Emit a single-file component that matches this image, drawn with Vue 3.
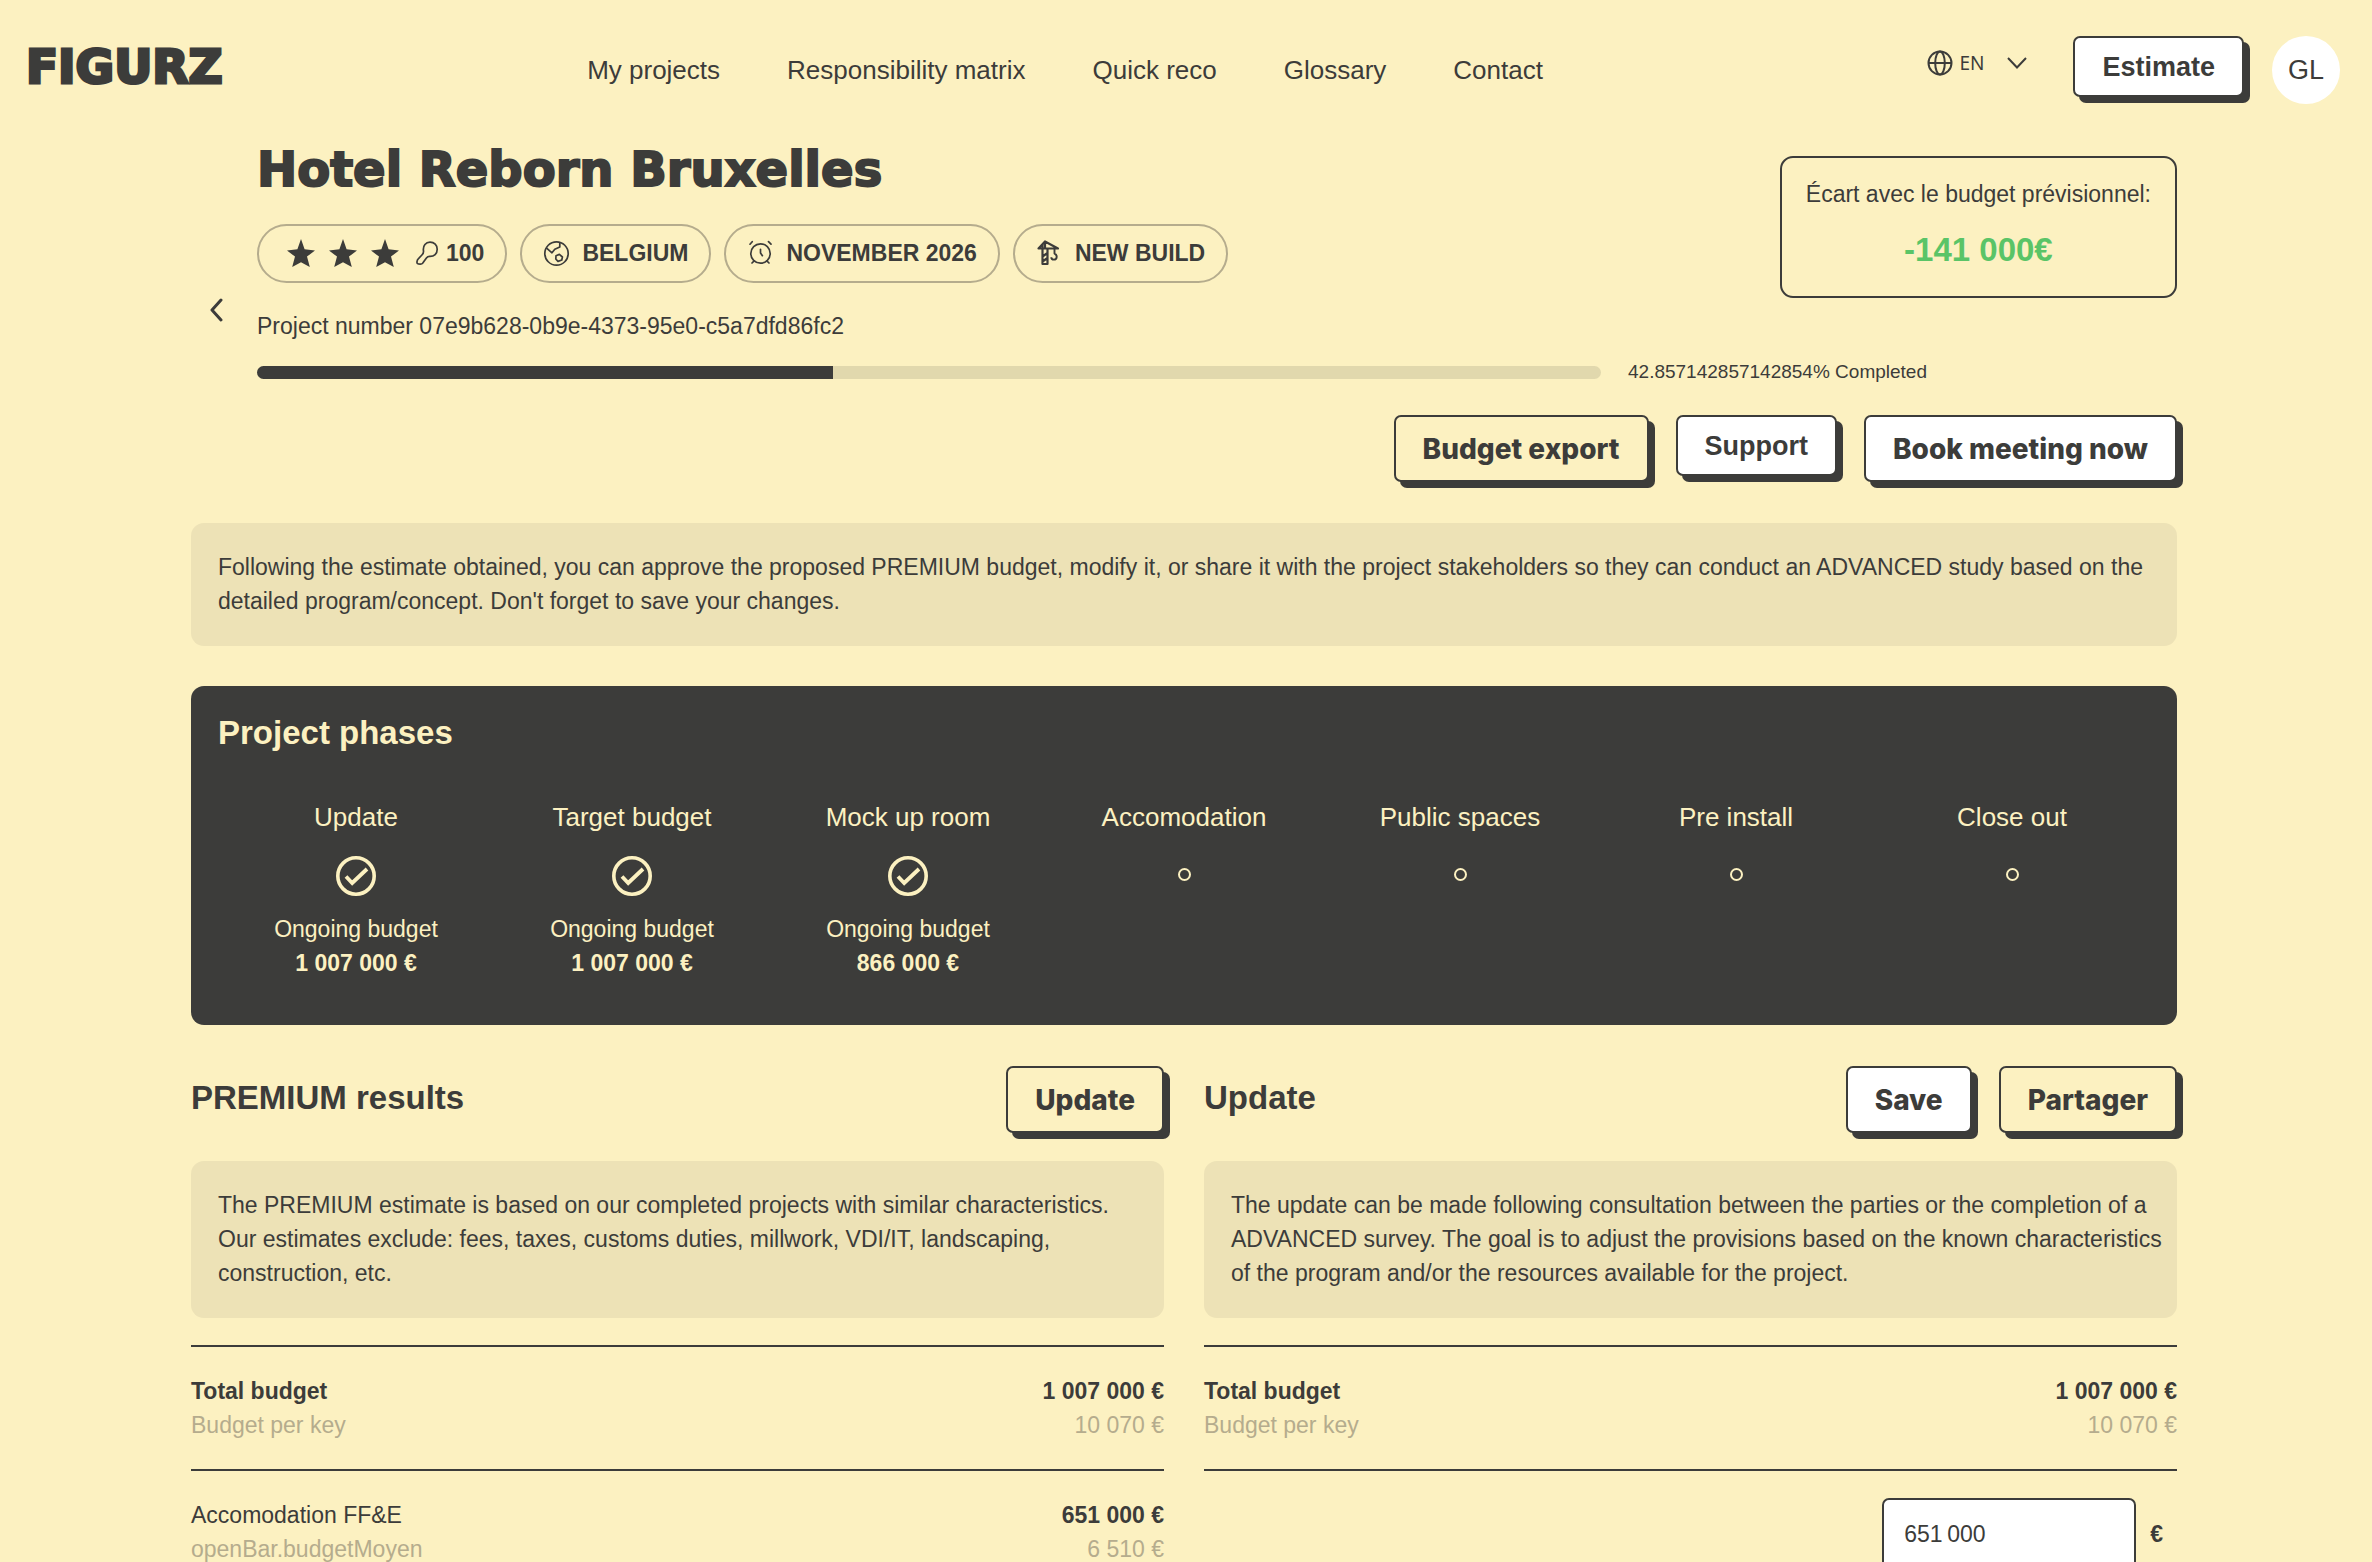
<script setup>
import { ref } from 'vue'

const lang = ref('EN')
const accomodation = ref('651\u202f000')

const links = ['My projects', 'Responsibility matrix', 'Quick reco', 'Glossary', 'Contact']

const progress = 42.857142857142854

const phases = [
  { name: 'Update', budget: '1 007 000 €' },
  { name: 'Target budget', budget: '1 007 000 €' },
  { name: 'Mock up room', budget: '866 000 €' },
  { name: 'Accomodation' },
  { name: 'Public spaces' },
  { name: 'Pre install' },
  { name: 'Close out' },
]
</script>

<template>
  <div class="page">
    <header class="header">
      <a class="logo" href="#">FIGURZ</a>
      <nav class="nav">
        <a v-for="link in links" :key="link" class="nav__link" href="#">{{ link }}</a>
      </nav>
      <div class="header__right">
        <label class="lang">
          <svg class="lang__globe" viewBox="0 0 26 26" fill="none" stroke="currentColor" stroke-width="2">
            <circle cx="13" cy="13" r="11.5" />
            <ellipse cx="13" cy="13" rx="4.8" ry="11.5" />
            <path d="M1.5 13h23" />
          </svg>
          <select v-model="lang" class="lang__select" aria-label="Language">
            <option>EN</option>
            <option>FR</option>
          </select>
          <svg class="lang__chevron" viewBox="0 0 20 12" fill="none" stroke="currentColor" stroke-width="2">
            <path d="M1 1l9 9.500l9-9.500" />
          </svg>
        </label>
        <button class="button button_small">Estimate</button>
        <button class="avatar">GL</button>
      </div>
    </header>

    <main class="main">
      <section class="project">
        <button class="back" aria-label="Back">
          <svg class="back__icon" viewBox="0 0 14 24" fill="none" stroke="currentColor" stroke-width="3" stroke-linecap="round" stroke-linejoin="round">
            <path d="M12 2L3 12l9 10" />
          </svg>
        </button>
        <div class="project__body">
          <div class="project__top">
            <div class="project__info">
              <h1 class="project__title">Hotel Reborn Bruxelles</h1>
              <div class="pills">
                <div class="pill pill_rating">
                  <div class="stars">
                    <svg v-for="n in 3" :key="n" class="icon" viewBox="0 0 28 28" fill="currentColor">
                      <path d="M14 0l3.600 10.200L28 11.400l-8 6.200L22.800 28L14 23.200L5.200 28L8 17.600l-8-6.200l10.400-1.200z" />
                    </svg>
                    <svg class="icon" viewBox="0 0 28 28" fill="none" stroke="currentColor" stroke-width="1.700" stroke-linejoin="round">
                      <path d="M10.500 12C9.600 6.600 13 3.200 17 3.200c4.300 0 7.200 3 7.200 7c0 4.600-3 7.400-7.600 7.200c-1.800 0-2.400.6-3.200 1.700l-3.600 5c-.6.9-1.400 1.100-2.500 1.100c-2.600 0-3.600-.7-3.300-2.600c.1-1.600.5-2.300 1.700-3.300l3.200-3.300c1.300-1.300 1.800-2.100 1.600-4z" />
                    </svg>
                  </div>
                  <span>100</span>
                </div>
                <div class="pill">
                  <svg class="icon" viewBox="0 0 28 28" fill="none" stroke="currentColor" stroke-width="1.700" stroke-linejoin="round">
                    <circle cx="13.500" cy="14.500" r="11.700" />
                    <path d="M3.300 8.800L9 13.800l2.800-3.500l5-2.300V3.300" />
                    <path d="M13 16.800l3.400-1.400l3 2.600l-.6 3l-3.800 1.400l-2.200-2.400z" />
                  </svg>
                  <span>BELGIUM</span>
                </div>
                <div class="pill">
                  <svg class="icon" viewBox="0 0 28 28" fill="none" stroke="currentColor" stroke-width="1.700" stroke-linecap="round">
                    <circle cx="13.500" cy="14.500" r="9.700" />
                    <path d="M13.500 10.300v3.600l1.900 2.800M7.200 21.800L5 24M19.800 21.800L22 24M3 5.200L5.200 2.700M21.500 2.700L24 5.200" />
                  </svg>
                  <span>NOVEMBER 2026</span>
                </div>
                <div class="pill">
                  <svg class="icon" viewBox="0 0 28 28" fill="none" stroke="currentColor" stroke-width="2.200" stroke-linejoin="round">
                    <path d="M6.500 10v15h5V10M6.500 17.500l5-3.500M6.500 22.500l5-3.500" />
                    <path d="M2.500 9.500L9 2.500L22 9.500zM6.500 9V5.500M9 3v6.500" />
                    <path d="M18.500 10v4.600c3.200 1.300 2.800 6-.6 6c-1.600 0-2.600-1-2.600-2.400" stroke-width="1.900" />
                  </svg>
                  <span>NEW BUILD</span>
                </div>
              </div>
              <p class="project__number">Project number 07e9b628-0b9e-4373-95e0-c5a7dfd86fc2</p>
            </div>
            <div class="gap-box">
              <span>Écart avec le budget prévisionnel:</span>
              <strong class="gap-box__value">-141 000€</strong>
            </div>
          </div>
          <div class="progress">
            <div class="progress__track">
              <div class="progress__fill" :style="{ width: progress + '%' }"></div>
            </div>
            <span>42.857142857142854% Completed</span>
          </div>
        </div>
      </section>

      <div class="actions">
        <button class="button button_clear">Budget export</button>
        <button class="button button_small">Support</button>
        <button class="button">Book meeting now</button>
      </div>

      <p class="note">
        Following the estimate obtained, you can approve the proposed PREMIUM budget, modify it, or share it with the project stakeholders so they can conduct an ADVANCED study based on the detailed program/concept. Don't forget to save your changes.
      </p>

      <section class="phases">
        <h2 class="title">Project phases</h2>
        <div class="phases__list">
          <div v-for="phase in phases" :key="phase.name" class="phase">
            <span class="phase__name">{{ phase.name }}</span>
            <template v-if="phase.budget">
              <svg class="phase__check" viewBox="0 0 40 40" fill="none" stroke="currentColor">
                <circle cx="20" cy="20" r="18.200" stroke-width="3.600" />
                <path d="M10 20.500l6.200 6.500L31 13" stroke-width="3.800" />
              </svg>
              <span>Ongoing budget</span>
              <strong>{{ phase.budget }}</strong>
            </template>
            <span v-else class="phase__dot"></span>
          </div>
        </div>
      </section>

      <div class="columns">
        <section class="column">
          <div class="column__head">
            <h2 class="title">PREMIUM results</h2>
            <button class="button button_clear">Update</button>
          </div>
          <p class="note">
            The PREMIUM estimate is based on our completed projects with similar characteristics. Our estimates exclude: fees, taxes, customs duties, millwork, VDI/IT, landscaping, construction, etc.
          </p>
          <table class="budget">
            <tbody>
              <tr>
                <td><strong>Total budget</strong><span class="muted">Budget per key</span></td>
                <td><strong>1 007 000 €</strong><span class="muted">10 070 €</span></td>
              </tr>
              <tr>
                <td><span>Accomodation FF&amp;E</span><span class="muted">openBar.budgetMoyen</span></td>
                <td><strong>651 000 €</strong><span class="muted">6 510 €</span></td>
              </tr>
            </tbody>
          </table>
        </section>

        <section class="column">
          <div class="column__head">
            <h2 class="title">Update</h2>
            <div class="column__buttons">
              <button class="button">Save</button>
              <button class="button button_clear">Partager</button>
            </div>
          </div>
          <p class="note">
            The update can be made following consultation between the parties or the completion of a ADVANCED survey. The goal is to adjust the provisions based on the known characteristics of the program and/or the resources available for the project.
          </p>
          <table class="budget">
            <tbody>
              <tr>
                <td><strong>Total budget</strong><span class="muted">Budget per key</span></td>
                <td><strong>1 007 000 €</strong><span class="muted">10 070 €</span></td>
              </tr>
              <tr>
                <td></td>
                <td>
                  <label class="amount">
                    <input v-model="accomodation" class="amount__input" type="text" aria-label="Accomodation FF&amp;E" />
                    <strong>€</strong>
                  </label>
                </td>
              </tr>
            </tbody>
          </table>
        </section>
      </div>
    </main>
  </div>
</template>

<style>
body {
  margin: 0;
  background-color: #fcf1c1;
}
</style>

<style scoped>
.page {
  height: 100vh;
  overflow: hidden;
  color: #3c3c3a;
  font-family: "Liberation Sans", Arial, sans-serif;
  font-size: 23px;
  line-height: 34px;
}

.page * {
  box-sizing: border-box;
}

h1,
h2,
p {
  margin: 0;
}

button,
input,
select {
  font: inherit;
  color: inherit;
}

a {
  color: inherit;
  text-decoration: none;
}

.header {
  display: flex;
  align-items: flex-start;
  justify-content: space-between;
  padding: 36px 32px 0 26px;
}

.logo {
  font-family: "DejaVu Sans", sans-serif;
  font-weight: 700;
  font-size: 47px;
  line-height: 62px;
  -webkit-text-stroke: 3px currentColor;
}

.nav {
  display: flex;
  gap: 67px;
  margin-right: 20px;
  font-size: 26px;
  line-height: 68px;
}

.header__right {
  display: flex;
  align-items: flex-start;
  gap: 28px;
}

.lang {
  display: flex;
  align-items: center;
  height: 54px;
  margin-right: 18px;
}

.lang__globe {
  width: 26px;
  height: 26px;
}

.lang__select {
  appearance: none;
  width: 54px;
  padding: 0 0 0 6px;
  border: none;
  background: none;
  font-family: "Noto Sans", sans-serif;
  font-size: 19px;
}

.lang__chevron {
  width: 20px;
  height: 12px;
}

.button {
  height: 67px;
  padding: 0 27px;
  border: 2px solid #3c3c3a;
  border-radius: 7px;
  background-color: #fff;
  box-shadow: 6px 6px 0 #3c3c3a;
  font-family: Inter, sans-serif;
  font-weight: 800;
  font-size: 28px;
  line-height: 34px;
  cursor: pointer;
}

.button_small {
  height: 61px;
  font-family: "Liberation Sans", Arial, sans-serif;
  font-weight: 700;
  font-size: 27px;
}

.button_clear {
  background-color: #fcf1c1;
}

.avatar {
  width: 68px;
  height: 68px;
  padding: 0;
  border: none;
  border-radius: 50%;
  background-color: #fff;
  font-size: 27px;
}

.main {
  padding: 35px 195px 0 191px;
}

.project {
  display: flex;
  align-items: flex-start;
}

.back {
  width: 66px;
  height: 34px;
  margin-top: 154px;
  padding: 0 0 0 18px;
  border: none;
  background: none;
  text-align: left;
  cursor: pointer;
}

.back__icon {
  display: block;
  width: 14px;
  height: 24px;
}

.project__body {
  flex: 1;
}

.project__top {
  display: flex;
  justify-content: space-between;
  align-items: flex-start;
}

.project__title {
  font-family: "DejaVu Sans", sans-serif;
  font-weight: 700;
  font-size: 48px;
  line-height: 60px;
  -webkit-text-stroke: 2px currentColor;
}

.pills {
  display: flex;
  gap: 13px;
  margin-top: 25px;
}

.pill {
  display: flex;
  align-items: center;
  gap: 11px;
  height: 59px;
  padding: 0 21px 2px;
  border: 2px solid #b5ac8d;
  border-radius: 30px;
  font-weight: 700;
}

.pill_rating {
  gap: 5px;
  padding-left: 28px;
}

.stars {
  display: flex;
  gap: 14px;
}

.icon {
  width: 28px;
  height: 28px;
}

.project__number {
  margin-top: 26px;
}

.gap-box {
  display: flex;
  flex-direction: column;
  align-items: center;
  gap: 22px;
  margin-top: 17px;
  padding: 19px 24px 29px;
  border: 2px solid #3c3c3a;
  border-radius: 13px;
}

.gap-box__value {
  color: #5ac467;
  font-size: 33px;
}

.progress {
  display: flex;
  align-items: center;
  gap: 27px;
  margin-top: 12px;
  font-size: 19px;
}

.progress__track {
  flex: 0 0 70%;
  height: 13px;
  overflow: hidden;
  border-radius: 7px;
  background-color: #e1d8ad;
}

.progress__fill {
  height: 100%;
  background-color: #3c3c3a;
}

.actions {
  display: flex;
  justify-content: flex-end;
  align-items: flex-start;
  gap: 27px;
  margin: 26px 0 41px;
}

.note {
  padding: 27px 14px 28px 27px;
  border-radius: 13px;
  background-color: #ede2b6;
}

.phases {
  min-height: 339px;
  margin-top: 40px;
  padding: 27px 27px 44px;
  border-radius: 13px;
  background-color: #3c3c3a;
  color: #fcf1c1;
}

.title {
  font-size: 33px;
  line-height: 40px;
}

.phases__list {
  display: grid;
  grid-template-columns: repeat(7, 1fr);
  margin-top: 47px;
}

.phase {
  display: flex;
  flex-direction: column;
  align-items: center;
}

.phase__name {
  font-size: 26px;
}

.phase__check {
  width: 40px;
  height: 40px;
  margin: 22px 0 16px;
}

.phase__dot {
  width: 13px;
  height: 13px;
  margin-top: 34px;
  border: 2px solid #fcf1c1;
  border-radius: 50%;
}

.columns {
  display: grid;
  grid-template-columns: 1fr 1fr;
  gap: 40px;
  margin-top: 41px;
}

.column__head {
  display: flex;
  justify-content: space-between;
  align-items: center;
  margin-bottom: 28px;
}

.column__head .title {
  padding-bottom: 3px;
}

.column__buttons {
  display: flex;
  gap: 27px;
}

.budget {
  width: 100%;
  margin-top: 27px;
  border-spacing: 0;
}

.budget td {
  padding: 27px 0;
  border-top: 2px solid #3c3c3a;
  vertical-align: top;
}

.budget td:last-child {
  text-align: right;
}

.budget td > * {
  display: block;
}

.budget .muted {
  color: #b5ac8d;
}

.budget .amount {
  display: flex;
  justify-content: flex-end;
  align-items: center;
  gap: 14px;
  padding-right: 14px;
}

.amount__input {
  width: 254px;
  height: 72px;
  padding: 0 20px;
  border: 2px solid #3c3c3a;
  border-radius: 7px;
  background-color: #fff;
}
</style>
